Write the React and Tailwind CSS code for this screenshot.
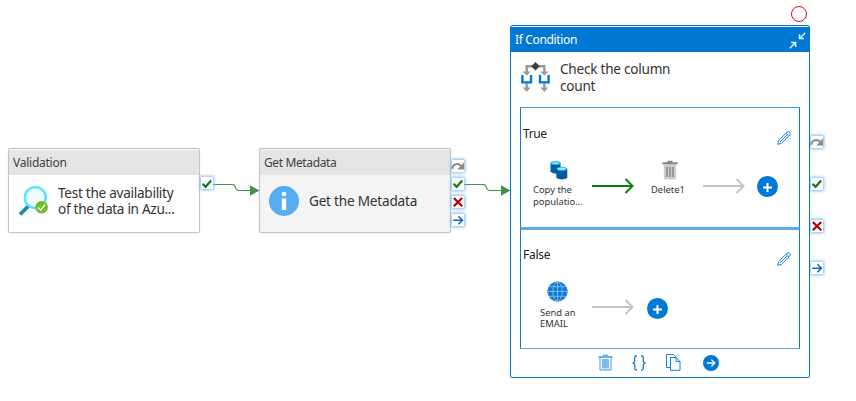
import React from "react";

const badgeGlyphs = {
  skip: (
    <>
      <path d="M1.2 9.8 C2 4.6 7.2 3.6 10.2 7" fill="none" stroke="#8a8a8a" strokeWidth="1.9" />
      <path d="M13 3.2 V10.6 H6.4 Z" fill="#8a8a8a" />
    </>
  ),
  success: <path d="M2.6 6.8 L5.6 9.8 L11.2 3.6" fill="none" stroke="#107c10" strokeWidth="2.2" />,
  fail: <path d="M2.8 3 L11.2 11.2 M11.2 3 L2.8 11.2" fill="none" stroke="#a80000" strokeWidth="2.2" />,
  done: <path d="M2.2 7.2 H11.4 M7.4 3.2 L11.4 7.2 L7.4 11.2" fill="none" stroke="#0f6cbd" strokeWidth="1.6" />,
};

function Badge({ kind }) {
  return (
    <div className="h-[12px] w-[12px] bg-white shadow-[0_0_3px_1px_#7dbcf0]">
      <svg className="-ml-px -mt-px block h-[14px] w-[14px] max-w-none" viewBox="0 0 14 14">{badgeGlyphs[kind]}</svg>
    </div>
  );
}

function Card({ title, body, children }) {
  return (
    <div className={"flex h-[85px] w-[192px] flex-col rounded-[2px] border border-[#c4c4c4] shadow-[0_0_1px_#bbb] " + body}>
      <div className="mt-px flex h-[25px] items-center bg-[#e5e5e5] pl-1 pt-px text-[12px] leading-[16px] text-[#404040]">{title}</div>
      <div className="flex flex-1 items-center pb-[6px]">{children}</div>
    </div>
  );
}

function Arrow({ color, width }) {
  return (
    <svg className="h-[16px] w-[42px] shrink-0" viewBox="0 0 42 16" fill="none" stroke={color} strokeWidth={width}>
      <path d="M0 8 H40.4 M33.5 1 L40.5 8 L33.5 15" />
    </svg>
  );
}

function Plus() {
  return (
    <svg className="h-[21px] w-[21px] shrink-0" viewBox="0 0 21 21">
      <circle cx="10.5" cy="10.5" r="10.5" fill="#0078d4" />
      <path d="M6 11.5 H15 M10.5 7 V16" stroke="#fff" strokeWidth="2" />
    </svg>
  );
}

function Pencil() {
  return (
    <svg className="h-[14px] w-[14px]" viewBox="0 0 14 14" fill="none" stroke="#1680d8" strokeWidth="1">
      <path d="M.7 13.3 L1.6 9.6 L10 1.2 Q11.2 0 12.7 1.3 Q14 2.8 12.8 4 L4.4 12.4 Z M9 2.2 L11.8 5 M10.4 3.6 L3.2 10.8" />
    </svg>
  );
}

function Database() {
  return (
    <svg className="block h-[20px] w-[18px]" viewBox="0 0 18 20">
      <path d="M.5 2.8 V12 Q5 15 10.5 13 V2.8Z" fill="#005ba1" />
      <ellipse cx="5.5" cy="2.9" rx="5" ry="2" fill="#32b5dc" />
      <ellipse cx="5.5" cy="3" rx="3.6" ry="1.1" fill="#7ce6f8" />
      <path d="M6.3 8.8 V18 Q11.8 20.8 17.3 18 V8.8Z" fill="#005ba1" />
      <ellipse cx="11.8" cy="8.8" rx="5.5" ry="2" fill="#32b5dc" />
      <ellipse cx="11.8" cy="8.9" rx="4" ry="1.1" fill="#8ce9f8" />
    </svg>
  );
}

function Bin() {
  return (
    <svg className="block h-[20px] w-[16px]" viewBox="0 0 16 20">
      <path d="M1.8 5 H14.2 V18 Q14.2 19.5 12.7 19.5 H3.3 Q1.8 19.5 1.8 18Z" fill="#cecece" />
      <path d="M5 7 V17 M8 7 V17 M11 7 V17" stroke="#7a7a7a" strokeWidth="1.3" />
      <path d="M.5 2.3 H15.5 V4.6 H.5Z M5.5 .8 H10.5 V3 H5.5Z" fill="#858585" />
    </svg>
  );
}

function Globe() {
  return (
    <svg className="block h-[21px] w-[21px]" viewBox="0 0 21 21">
      <circle cx="10.5" cy="10.5" r="10" fill="#0f78d4" />
      <g fill="none" stroke="#85c0ee" strokeWidth=".9">
        <circle cx="10.5" cy="10.5" r="9.6" stroke="#3b91dc" />
        <ellipse cx="10.5" cy="10.5" rx="4.7" ry="9.6" />
        <path d="M10.5 1 V20 M1 10.5 H20 M2.3 5.7 H18.7 M2.3 15.3 H18.7" />
      </g>
    </svg>
  );
}

function ConditionIcon() {
  return (
    <svg className="h-[30px] w-[29px] shrink-0" viewBox="0 0 29 30">
      <path d="M5.7 10 V4.2 H23.3 V10 M5.7 21.5 V27 M23.3 21.5 V27" fill="none" stroke="#999" strokeWidth="2.4" />
      <path d="M1.7 9.5 H9.7 L5.7 13.8Z M19.3 9.5 H27.3 L23.3 13.8Z M1.7 25.5 H9.7 L5.7 30Z M19.3 25.5 H27.3 L23.3 30Z" fill="#999" />
      <path d="M14.5 0 L18.7 4.2 L14.5 8.4 L10.3 4.2Z" fill="#3c3c3c" />
      <path d="M1.4 13 V20.4 H10 V13 M19 13 V20.4 H27.6 V13" fill="none" stroke="#0078d4" strokeWidth="2.4" />
    </svg>
  );
}

function Activity({ icon, label, className }) {
  return (
    <div className={"flex shrink-0 flex-col whitespace-nowrap text-[9.4px] text-[#333] " + className}>
      {icon}
      <div>{label}</div>
    </div>
  );
}

export default function App() {
  return (
    <main className="relative h-[401px] w-[856px] overflow-hidden bg-white font-['Noto_Sans','Open_Sans',sans-serif]">
      <section className="absolute left-[8px] top-[148px]">
        <Card title={<span className="tracking-[-0.25px]">Validation</span>} body="bg-white">
          <svg className="ml-[9px] h-[32px] w-[32px] shrink-0" viewBox="0 0 32 32">
            <path d="M2 29.5 L10.5 21" stroke="#198ab3" strokeWidth="3.8" />
            <circle cx="17.3" cy="12.6" r="10.5" fill="#f4fcff" stroke="#50e6ff" strokeWidth="2.4" />
            <circle cx="23.6" cy="22.3" r="6.3" fill="#76bc2d" />
            <path d="M20 22.4 L22.6 25 L27 19.8" fill="none" stroke="#fff" strokeWidth="1.4" />
          </svg>
          <div className="ml-2 whitespace-nowrap text-[13.6px] leading-[16px] tracking-[-0.28px] text-[#333]">
            Test the availability
            <br />
            <span className="tracking-[-0.3px]">of the data in Azu...</span>
          </div>
        </Card>
      </section>

      <section className="absolute left-[259px] top-[148px]">
        <Card title={<span className="tracking-[-0.38px]">Get Metadata</span>} body="bg-[#f4f4f4]">
          <svg className="ml-[9px] h-[30px] w-[30px] shrink-0" viewBox="0 0 30 30">
            <circle cx="15" cy="15" r="15" fill="#56adef" />
            <circle cx="15" cy="8" r="2.3" fill="#fff" />
            <path d="M12.8 12.5 H17.2 V24 H12.8Z" fill="#fff" />
          </svg>
          <div className="ml-[10px] whitespace-nowrap text-[13.6px] leading-[16px] tracking-[-0.22px] text-[#333]">Get the Metadata</div>
        </Card>
      </section>

      <svg className="absolute left-0 top-0 h-[401px] w-[856px]" viewBox="0 0 856 401">
        <g fill="none" stroke="#468e4c" strokeWidth="1.1">
          <path d="M213 184.5 H232 C238 184.5 233 190.5 239 190.5 H251" />
          <path d="M464 184.5 H483 C489 184.5 484 190.5 490 190.5 H502" />
        </g>
        <path d="M250 185.3 L259.5 190.5 L250 195.7Z M501 185.3 L510.5 190.5 L501 195.7Z" fill="#468e4c" />
        <circle cx="799" cy="14" r="7.5" fill="#fff" stroke="#f00014" />
      </svg>

      <div className="absolute left-[201px] top-[178px]"><Badge kind="success" /></div>
      <div className="absolute left-[452px] top-[160px] flex flex-col gap-[6px]">
        <Badge kind="skip" />
        <Badge kind="success" />
        <Badge kind="fail" />
        <Badge kind="done" />
      </div>
      <div className="absolute left-[811px] top-[136px] flex flex-col gap-[30px]">
        <Badge kind="skip" />
        <Badge kind="success" />
        <Badge kind="fail" />
        <Badge kind="done" />
      </div>

      <section className="absolute left-[510px] top-[25px] flex h-[353px] w-[300px] flex-col rounded-[2px] border border-[#0078d4] bg-white">
        <header className="mt-px flex h-[25px] shrink-0 items-center justify-between bg-[#0078d4] pl-1 pr-[3px] text-[12px] text-white">
          <span className="mt-px whitespace-nowrap tracking-[-0.35px]">If Condition</span>
          <svg className="mt-[2px] h-[17px] w-[17px]" viewBox="0 0 17 17" fill="none" stroke="#e5f2fc" strokeWidth="1.5">
            <path d="M16.3 .8 L10.8 6.3 M10.5 2.2 V6.6 H15 M.8 16.2 L6.3 10.7 M2.2 10.4 H6.6 V14.9" />
          </svg>
        </header>
        <div className="flex h-[55px] shrink-0 items-center pb-[5px] pl-[10px] text-[13.6px] leading-[17px] text-[#333]">
          <ConditionIcon />
          <div className="-mt-px ml-[10px] whitespace-nowrap tracking-[-0.25px]">
            Check the column
            <br />
            count
          </div>
        </div>

        <div className="mx-[9px] flex h-[121px] shrink-0 flex-col border border-[#0f7ad2] border-b-[#5baae6] border-t-[#3f9ae0]">
          <div className="flex h-[52px] shrink-0 justify-between pl-[2px] pr-[8px] pt-[18px] text-[12px] leading-[16px] text-[#222]">
            <span className="tracking-[-0.4px]">True</span>
            <div className="pt-[5px]"><Pencil /></div>
          </div>
          <div className="flex items-start">
            <Activity
              className="ml-[12px] w-[59px] leading-[12px]"
              icon={<div className="mb-[4px] ml-[17px]"><Database /></div>}
              label={<>Copy the<br />populatio...</>}
            />
            <div className="mt-[18px]"><Arrow color="#107c10" width={2} /></div>
            <Activity
              className="ml-[17px] w-[52px] leading-[12px]"
              icon={<div className="mb-[4px] ml-[11px]"><Bin /></div>}
              label="Delete1"
            />
            <div className="mt-[18px]"><Arrow color="#c4c4c4" width={2} /></div>
            <div className="ml-[12px] mt-[16px]"><Plus /></div>
          </div>
        </div>

        <div className="mx-[9px] flex h-[121px] shrink-0 flex-col border border-[#0f7ad2] border-b-[#5baae6] border-t-2 border-t-[#5baae6]">
          <div className="flex h-[51px] shrink-0 justify-between pl-[2px] pr-[8px] pt-[17px] text-[12px] leading-[16px] text-[#222]">
            <span className="tracking-[-0.25px]">False</span>
            <div className="pt-[5px]"><Pencil /></div>
          </div>
          <div className="flex items-start">
            <Activity
              className="ml-[19px] w-[52px] leading-[11px]"
              icon={<div className="mb-[5px] ml-[7px]"><Globe /></div>}
              label={<>Send an<br />EMAIL</>}
            />
            <div className="mt-[18px]"><Arrow color="#c4c4c4" width={2} /></div>
            <div className="ml-[12.5px] mt-[16.5px]"><Plus /></div>
          </div>
        </div>

        <footer className="flex flex-1 items-center pb-px pl-[87px]">
          <svg className="h-[17px] w-[15px]" viewBox="0 0 15 17">
            <path d="M2 3 H13 V16 H2Z" fill="#fff" stroke="#3f97df" />
            <path d="M4 5 H11 V14.5 H4Z" fill="#7db9e9" />
            <path d="M.5 2 H14.5 V4 H.5Z M5 .5 H10 V2 H5Z" fill="#6cafe7" />
          </svg>
          <svg className="ml-[18px] h-[16px] w-[16px]" viewBox="0 0 16 16" fill="none" stroke="#1680d8" strokeWidth="1.3">
            <path d="M6 1 H5 Q3.7 1 3.7 2.5 V6 Q3.7 8 1.5 8 Q3.7 8 3.7 10 V13.5 Q3.7 15 5 15 H6 M10 1 H11 Q12.3 1 12.3 2.5 V6 Q12.3 8 14.5 8 Q12.3 8 12.3 10 V13.5 Q12.3 15 11 15 H10" />
          </svg>
          <svg className="ml-[19px] h-[17px] w-[15px]" viewBox="0 0 15 17" fill="none" stroke="#1680d8">
            <path d="M4.5 13.5 H.5 V.5 H7.5 L10.5 3.5 M4.5 3.5 H10 L14 7.5 V16.3 H4.5Z M10 3.5 V7.5 H14" />
          </svg>
          <svg className="ml-[22px] h-[16px] w-[16px]" viewBox="0 0 16 16">
            <circle cx="8" cy="8" r="8" fill="#0078d4" />
            <path d="M3.8 8 H11.8 M8.4 4.6 L11.8 8 L8.4 11.4" fill="none" stroke="#fff" strokeWidth="1.3" />
          </svg>
        </footer>
      </section>
    </main>
  );
}
